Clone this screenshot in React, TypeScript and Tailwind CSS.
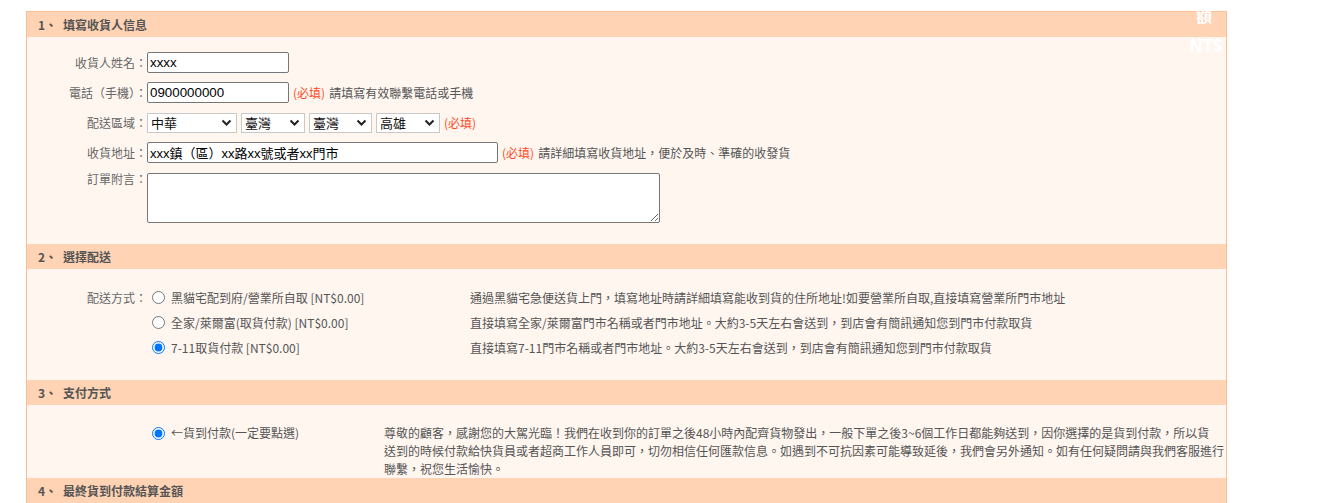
import React from "react";

const font = { fontFamily: '"Noto Sans CJK TC", "Noto Sans", sans-serif' };

function Header({ num, children }: { num: string; children: React.ReactNode }) {
  return (
    <div className="h-[25px] bg-[#ffd3b4] pl-[11px] flex items-center text-[12px] font-bold text-[#555] leading-[25px]">
      <span>{num}、</span>
      <span className="ml-[6px]">{children}</span>
    </div>
  );
}

function Req() {
  return <span className="text-[#ff4a1f] ml-[4px]">(必填)</span>;
}

function Select({ w, text }: { w: string; text: string }) {
  return (
    <div className={`${w} h-[20px] border border-[#c9c9c9] bg-white flex items-center justify-between pl-[3px] pr-[4px] text-[13px] text-[#111]`}>
      <span>{text}</span>
      <svg width="11" height="8" viewBox="0 0 11 8">
        <path d="M1.5 1.5 L5.5 5.5 L9.5 1.5" stroke="#222" strokeWidth="2" fill="none" />
      </svg>
    </div>
  );
}

function Radio({ checked, name }: { checked?: boolean; name: string }) {
  return (
    <input
      type="radio"
      name={name}
      defaultChecked={checked}
      className="m-0 ml-[5px] mr-[6px] w-[13px] h-[13px] shrink-0"
    />
  );
}

export default function App() {
  return (
    <div className="w-[1323px] h-[503px] bg-white overflow-hidden" style={font}>
      <div className="relative ml-[26px] mt-[11px] w-[1201px] border-t border-x border-[#f8be96] bg-[#fff6f0]">
        <Header num="1">填寫收貨人信息</Header>
        <div className="pt-[15px] pb-[21px] flex flex-col gap-[9px] text-[12px] text-[#666]">
          <div className="flex items-center h-[21px]">
            <div className="w-[120px] text-right">收貨人姓名：</div>
            <input
              readOnly
              value="xxxx"
              className="w-[142px] h-[21px] border border-[#767676] rounded-[2px] bg-white px-[2px] text-[13.33px] text-black"
              style={{ fontFamily: '"Liberation Sans", Arial, sans-serif' }}
            />
          </div>
          <div className="flex items-center h-[21px]">
            <div className="w-[120px] text-right">電話（手機）：</div>
            <input
              readOnly
              value="0900000000"
              className="w-[142px] h-[21px] border border-[#767676] rounded-[2px] bg-white px-[2px] text-[13.33px] text-black"
              style={{ fontFamily: '"Liberation Sans", Arial, sans-serif' }}
            />
            <Req />
            <span className="ml-[4px] text-[#555]">請填寫有效聯繫電話或手機</span>
          </div>
          <div className="flex items-center h-[21px]">
            <div className="w-[120px] text-right">配送區域：</div>
            <div className="flex gap-[4px] items-center">
              <Select w="w-[90px]" text="中華" />
              <Select w="w-[64px]" text="臺灣" />
              <Select w="w-[63px]" text="臺灣" />
              <Select w="w-[64px]" text="高雄" />
            </div>
            <Req />
          </div>
          <div className="flex items-center h-[21px]">
            <div className="w-[120px] text-right">收貨地址：</div>
            <input
              readOnly
              value="xxx鎮（區）xx路xx號或者xx門市"
              className="w-[351px] h-[21px] border border-[#767676] rounded-[2px] bg-white px-[2px] text-[13px] text-black"
              style={{ fontFamily: '"Liberation Sans", "Noto Sans CJK TC", sans-serif' }}
            />
            <Req />
            <span className="ml-[4px] text-[#555]">請詳細填寫收貨地址，便於及時、準確的收發貨</span>
          </div>
          <div className="flex items-start pt-[1px]">
            <div className="w-[120px] text-right leading-[12px]">訂單附言：</div>
            <textarea className="w-[513px] h-[50px] border border-[#767676] rounded-[2px] bg-white block" />
          </div>
        </div>

        <Header num="2">選擇配送</Header>
        <div className="pt-[16px] pb-[20px] flex text-[12px] text-[#555]">
          <div className="w-[120px] text-right h-[25px] leading-[25px] text-[#666]">配送方式：</div>
          <div className="flex flex-col">
            {[
              { t: "黑貓宅配到府/營業所自取 [NT$0.00]", d: "通過黑貓宅急便送貨上門，填寫地址時請詳細填寫能收到貨的住所地址!如要營業所自取,直接填寫營業所門市地址" },
              { t: "全家/萊爾富(取貨付款) [NT$0.00]", d: "直接填寫全家/萊爾富門市名稱或者門市地址。大約3-5天左右會送到，到店會有簡訊通知您到門市付款取貨" },
              { t: "7-11取貨付款 [NT$0.00]", d: "直接填寫7-11門市名稱或者門市地址。大約3-5天左右會送到，到店會有簡訊通知您到門市付款取貨", c: true },
            ].map((r, i) => (
              <div key={i} className="flex items-center h-[25px]">
                <div className="w-[323px] flex items-center">
                  <Radio name="ship" checked={r.c} />
                  <span>{r.t}</span>
                </div>
                <span>{r.d}</span>
              </div>
            ))}
          </div>
        </div>

        <Header num="3">支付方式</Header>
        <div className="pt-[19px] flex text-[12px] text-[#555] leading-[18px]">
          <div className="w-[120px]" />
          <div className="w-[237px] flex items-center h-[18px] shrink-0">
            <Radio name="pay" checked />
            <span>←貨到付款(一定要點選)</span>
          </div>
          <div className="whitespace-nowrap">
            尊敬的顧客，感謝您的大駕光臨！我們在收到你的訂單之後48小時內配齊貨物發出，一般下單之後3~6個工作日都能夠送到，因你選擇的是貨到付款，所以貨
            <br />
            送到的時候付款給快貨員或者超商工作人員即可，切勿相信任何匯款信息。如遇到不可抗因素可能導致延後，我們會另外通知。如有任何疑問請與我們客服進行
            <br />
            聯繫，祝您生活愉快。
          </div>
        </div>

        <Header num="4">最終貨到付款結算金額</Header>
        <div className="h-[40px]" />

        <div className="absolute left-[1160px] top-[-6px] w-[40px] h-[70px] overflow-hidden text-white font-bold text-[16px] leading-[20px]" style={{ fontFamily: '"Open Sans", "Noto Sans CJK TC", sans-serif' }}>
          <div className="pl-[9px]">額</div>
          <div className="mt-[10px] pl-[2px] text-[17px] whitespace-nowrap">NT$</div>
        </div>
      </div>
    </div>
  );
}
